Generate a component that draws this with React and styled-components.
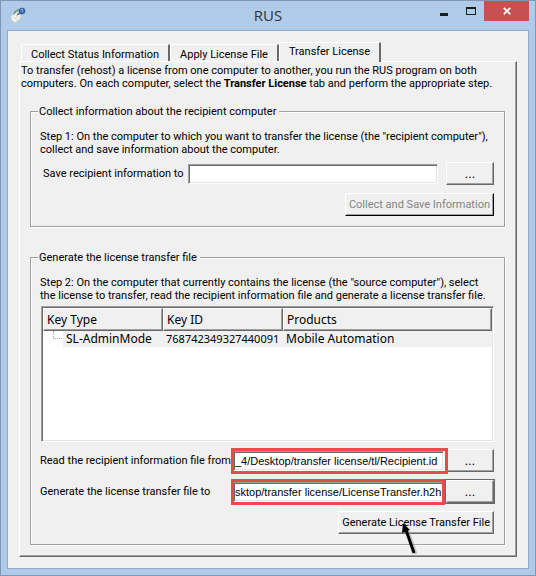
import React, { useState } from 'react';
import styled, { createGlobalStyle, css } from 'styled-components';

const GlobalStyle = createGlobalStyle`
  * {
    box-sizing: border-box;
  }
  body {
    margin: 0;
    background: #b0cbe8;
    font: 11px/13px Roboto, 'Liberation Sans', sans-serif;
    color: #000;
  }
  button, input {
    font: inherit;
    color: inherit;
  }
`;

const Window = styled.div`
  position: relative;
  display: flex;
  flex-direction: column;
  min-height: 100vh;
  padding: 0 6px 6px;
  border: 1px solid #8296b4;
  background: #b0cbe8;
`;

const TitleBar = styled.header`
  display: grid;
  grid-template-columns: 1fr auto 1fr;
  height: 29px;
`;

const AppIcon = styled.svg`
  width: 16px;
  height: 16px;
  margin: 6px 0 0 3px;
`;

const Title = styled.h1`
  margin: 0;
  font: 15px/29px 'Open Sans', 'Noto Sans', sans-serif;
  color: #333;
`;

const WindowButtons = styled.div`
  display: flex;
  justify-content: flex-end;
`;

const WindowButton = styled.button`
  display: flex;
  align-items: center;
  justify-content: center;
  width: ${(p) => (p.$close ? 45 : 27)}px;
  height: 20px;
  padding: 0;
  border: 0;
  background: ${(p) => (p.$close ? '#c75050' : 'transparent')};
`;

const Client = styled.main`
  flex: 1;
  display: flex;
  flex-direction: column;
  padding: 11px;
  border: 1px solid #93abc8;
  background: #f0f0f0;
`;

const TabList = styled.div`
  display: flex;
  align-items: flex-end;
  height: 19px;
  padding-left: 2px;
`;

const Tab = styled.button`
  height: 17px;
  padding: 2px 9px 0;
  border: solid #fff;
  border-width: 1px 2px 0 1px;
  border-right-color: #696969;
  border-radius: 2px 1px 0 0;
  background: #f0f0f0;
  line-height: 16px;
  white-space: nowrap;
  ${(p) =>
    p.$active &&
    css`
      position: relative;
      height: 20px;
      margin-bottom: -1px;
      padding: 1px 9px 2px;
    `}
`;

const Panel = styled.section`
  flex: 1;
  padding: 2px 1px 10px;
  border: 1px solid #fff;
  border-right: 1px solid #696969;
  border-bottom: 1px solid #696969;
  box-shadow: inset -1px -1px 0 #a0a0a0;
`;

const Intro = styled.p`
  margin: 0 8px 15px 0;
`;

const Group = styled.fieldset`
  min-width: 0;
  margin: 0 10px 24px 9px;
  padding: 12px 10px 10px 9px;
  border: 1px solid #a0a0a0;
  box-shadow: 1px 1px 0 #fff, inset 1px 1px 0 #fff;

  &:last-child {
    margin-bottom: 0;
  }
`;

const Legend = styled.legend`
  margin-left: -2px;
  padding: 0 3px 0 1px;
  background: #f0f0f0;
`;

const Step = styled.p`
  margin: 0;
`;

const Field = styled.div`
  display: flex;
  align-items: center;
  height: 25px;
  margin-top: ${(p) => p.$top}px;
`;

const Label = styled.label`
  flex: none;
  width: ${(p) => (p.$indent ? 148 : 193)}px;
  padding-left: ${(p) => (p.$indent ? 3 : 0)}px;
  white-space: nowrap;
`;

const InputWrap = styled.div`
  position: relative;
  flex: 1;
  min-width: 0;
  margin-right: ${(p) => (p.$marked ? 2 : 8)}px;
`;

const TextInput = styled.input`
  display: block;
  width: 100%;
  height: 20px;
  padding: 0 1px;
  border: 1px solid #fff;
  border-top-color: #a0a0a0;
  border-left-color: #a0a0a0;
  outline: 0;
  background: #fff;
  box-shadow: inset 1px 1px 0 #696969, inset -1px -1px 0 #e3e3e3;
  font-family: 'Liberation Sans', Arial, sans-serif;
`;

/* red frame drawn over a field */
const Highlight = styled.span`
  position: absolute;
  inset: -3px ${(p) => (p.$wide ? -4 : -1)}px -3px -2px;
  border: 3px solid #e84c48;
  pointer-events: none;
  z-index: 1;
`;

const Button = styled.button`
  flex: none;
  height: 23px;
  padding: 0 3px;
  border: 1px solid #fff;
  border-right-color: #696969;
  border-bottom-color: #696969;
  background: #f0f0f0;
  box-shadow: inset -1px -1px 0 #a0a0a0;
  white-space: nowrap;

  &:disabled {
    color: #838383;
    border-right-color: #000;
    border-bottom-color: #000;
  }
`;

const BrowseButton = styled(Button)`
  width: 48px;
  font-size: 13px;
  ${(p) =>
    p.$focused &&
    css`
      outline: 1px solid #696969;
    `}
`;

const Actions = styled.div`
  display: flex;
  justify-content: flex-end;
  margin-top: ${(p) => p.$top}px;
`;

const KeyList = styled.div`
  height: 136px;
  margin: 4px 0 0 1px;
  border: 1px solid #fff;
  border-top-color: #a0a0a0;
  border-left-color: #a0a0a0;
  background: #fff;
  box-shadow: inset 1px 1px 0 #696969, inset -1px -1px 0 #e3e3e3;
  padding: 1px;
`;

const Table = styled.table`
  width: 100%;
  border-collapse: separate;
  border-spacing: 0;
  table-layout: fixed;
  font: 12px/16px 'Noto Sans', 'Open Sans', sans-serif;
`;

const Th = styled.th`
  width: ${(p) => p.$width || 'auto'};
  height: 23px;
  padding: 0 3px;
  border: 1px solid #fff;
  border-right-color: #696969;
  border-bottom-color: #696969;
  background: #f0f0f0;
  box-shadow: inset -1px -1px 0 #a0a0a0;
  font-weight: normal;
  text-align: left;
`;

const Td = styled.td`
  height: 16px;
  padding: 0 3px;
  background: #f0f0f0;
  white-space: nowrap;
`;

const IdCell = styled(Td)`
  font-size: 11px;
`;

const TreeCell = styled(Td)`
  padding: 0;
  background: linear-gradient(to right, #fff 20px, #f0f0f0 20px);
`;

const TreeItem = styled.span`
  display: flex;
  align-items: center;
`;

const Branch = styled.span`
  width: 9px;
  height: 8px;
  margin: -8px 4px 0 10px;
  border: 1px dotted #a0a0a0;
  border-width: 0 0 1px 1px;
`;

const Cursor = styled.svg`
  position: absolute;
  right: 115px;
  bottom: 19px;
  width: 20px;
  height: 34px;
  pointer-events: none;
`;

const keys = [{ type: 'SL-AdminMode', id: '768742349327440091', products: 'Mobile Automation' }];

const tabs = ['Collect Status Information', 'Apply License File', 'Transfer License'];

const App = () => {
  const [tab, setTab] = useState('Transfer License');
  const [saveTo, setSaveTo] = useState('');
  const [readFrom, setReadFrom] = useState('_4/Desktop/transfer license/tl/Recipient.id');
  const [generateTo, setGenerateTo] = useState('sktop/transfer license/LicenseTransfer.h2h');

  return (
    <>
      <GlobalStyle />
      <Window>
        <TitleBar>
          {/* tag with a small blue globe */}
          <AppIcon viewBox="0 0 16 16" aria-hidden="true">
            <path d="M1 9 8 5l3 4-1 3-5 4-4-4z" fill="#f3f1e9" stroke="#c9c7bd" strokeWidth=".6" />
            <path d="m4 10 3 3M6 8l2 3" stroke="#d7d3c9" />
            <path d="M4 7c1-3 4-5 7-4" fill="none" stroke="#6d8f51" strokeWidth="1.2" />
            <circle cx="12" cy="4" r="3" fill="#326bb0" stroke="#1e4b89" strokeWidth=".6" />
            <path d="M10 3c1-1 2-1 3 0l-1 2" fill="none" stroke="#a9cef0" strokeWidth=".8" />
            <path d="m7 8 3-2" stroke="#4f5148" strokeWidth="1.2" />
          </AppIcon>
          <Title>RUS</Title>
          <WindowButtons>
            <WindowButton aria-label="Minimize">
              <svg width="8" height="10">
                <path d="M0 7h8v3H0z" fill="#1c1c1c" />
              </svg>
            </WindowButton>
            <WindowButton aria-label="Maximize">
              <svg width="10" height="8">
                <path d="M0 0h10v8H0zM1 2v5h8V2z" fill="#1c1c1c" fillRule="evenodd" />
              </svg>
            </WindowButton>
            <WindowButton $close aria-label="Close">
              <svg width="8" height="8" viewBox="0 0 8 8">
                <path d="m.8.8 6.4 6.4m0-6.4L.8 7.2" stroke="#fff" strokeWidth="1.8" />
              </svg>
            </WindowButton>
          </WindowButtons>
        </TitleBar>

        <Client>
          <TabList role="tablist">
            {tabs.map((name) => (
              <Tab
                key={name}
                role="tab"
                aria-selected={tab === name}
                $active={tab === name}
                onClick={() => setTab(name)}>
                {name}
              </Tab>
            ))}
          </TabList>

          <Panel role="tabpanel">
            <Intro>
              To transfer (rehost) a license from one computer to another, you run the RUS program on
              both
              <br />
              computers. On each computer, select the <b>Transfer License</b> tab and perform the
              appropriate step.
            </Intro>

            {/* Step 1 */}
            <Group>
              <Legend>Collect information about the recipient computer</Legend>
              <Step>
                Step 1: On the computer to which you want to transfer the license (the "recipient
                computer"),
                <br />
                collect and save information about the computer.
              </Step>
              <Field $top={5}>
                <Label htmlFor="saveTo" $indent>
                  Save recipient information to
                </Label>
                <InputWrap>
                  <TextInput id="saveTo" value={saveTo} onChange={(e) => setSaveTo(e.target.value)} />
                </InputWrap>
                <BrowseButton>...</BrowseButton>
              </Field>
              <Actions $top={7}>
                <Button disabled>Collect and Save Information</Button>
              </Actions>
            </Group>

            {/* Step 2 */}
            <Group>
              <Legend>Generate the license transfer file</Legend>
              <Step>
                Step 2: On the computer that currently contains the license (the "source computer"),
                select
                <br />
                the license to transfer, read the recipient information file and generate a license
                transfer file.
              </Step>
              <KeyList>
                <Table>
                  <thead>
                    <tr>
                      <Th $width="120px">Key Type</Th>
                      <Th $width="120px">Key ID</Th>
                      <Th>Products</Th>
                    </tr>
                  </thead>
                  <tbody>
                    {keys.map((key) => (
                      <tr key={key.id}>
                        <TreeCell>
                          <TreeItem>
                            <Branch />
                            {key.type}
                          </TreeItem>
                        </TreeCell>
                        <IdCell>{key.id}</IdCell>
                        <Td>{key.products}</Td>
                      </tr>
                    ))}
                  </tbody>
                </Table>
              </KeyList>
              <Field $top={6}>
                <Label htmlFor="readFrom">Read the recipient information file from</Label>
                <InputWrap $marked>
                  <TextInput
                    id="readFrom"
                    value={readFrom}
                    onChange={(e) => setReadFrom(e.target.value)}
                  />
                  <Highlight $wide />
                </InputWrap>
                <BrowseButton>...</BrowseButton>
              </Field>
              <Field $top={6}>
                <Label htmlFor="generateTo">Generate the license transfer file to</Label>
                <InputWrap $marked>
                  <TextInput
                    id="generateTo"
                    value={generateTo}
                    onChange={(e) => setGenerateTo(e.target.value)}
                  />
                  <Highlight />
                </InputWrap>
                <BrowseButton $focused>...</BrowseButton>
              </Field>
              <Actions $top={7}>
                <Button>Generate License Transfer File</Button>
              </Actions>
            </Group>
          </Panel>
        </Client>

        {/* pointer arrow */}
        <Cursor viewBox="0 0 20 34" aria-hidden="true">
          <path d="m8 9 8 23" stroke="#999" strokeWidth="3" opacity=".5" />
          <path d="m6 8 8 23" stroke="#000" strokeWidth="3" />
          <path d="M3 1 2 11l8-3z" fill="#000" />
        </Cursor>
      </Window>
    </>
  );
};

export default App;
